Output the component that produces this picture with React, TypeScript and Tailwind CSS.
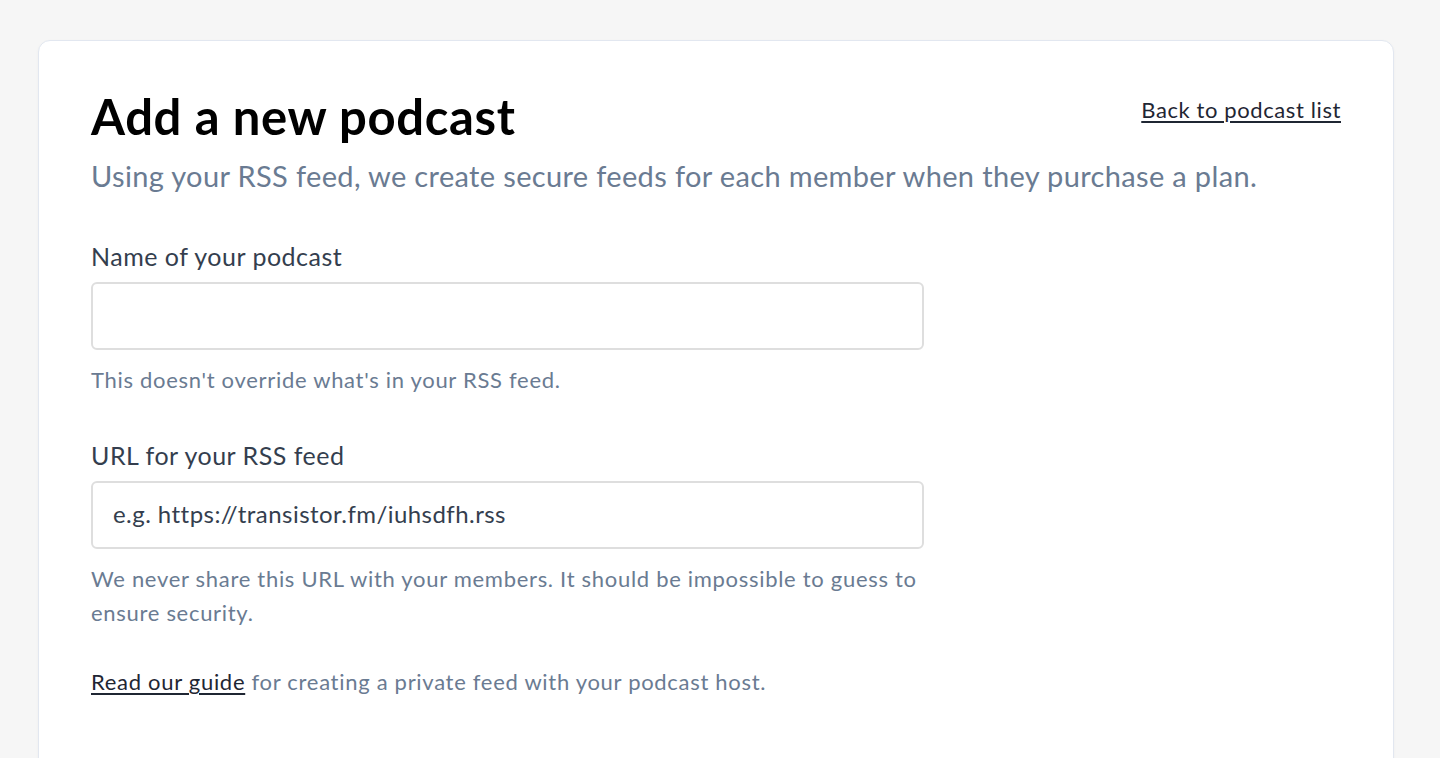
import React from "react";

export default function App() {
  return (
    <div
      className="min-h-[758px] bg-[#f6f6f6] pl-[38px] pr-[46px] pt-[40px] overflow-hidden"
      style={{ fontFamily: "Lato, 'Open Sans', sans-serif" }}
    >
      <div className="rounded-[12px] border border-[#e2e7f0] bg-white shadow-[0_1px_3px_rgba(0,0,0,0.04)] px-[52px] pt-[47px] pb-[120px]">
        <div className="flex items-start justify-between">
          <h1 className="text-[49px] leading-[56px] font-bold tracking-[0.65px] text-black">Add a new podcast</h1>
          <a href="#" className="mt-[8px] text-[22px] leading-[28px] tracking-[0.6px] text-[#1f2633] underline underline-offset-[3px]">
            Back to podcast list
          </a>
        </div>
        <p className="mt-[14px] text-[29px] leading-[36px] tracking-[0.35px] text-[#6a7b92]">
          Using your RSS feed, we create secure feeds for each member when they purchase a plan.
        </p>

        <div className="w-[833px]">
          <label className="mt-[46px] block text-[25px] leading-[32px] tracking-[0.5px] text-[#343e4e]">Name of your podcast</label>
          <input
            type="text"
            className="mt-[10px] block h-[68px] w-full rounded-[6px] border-2 border-[#dedede] bg-white px-[20px] text-[24px] tracking-[0.45px] text-[#343e4e] outline-none"
          />
          <p className="mt-[15px] text-[22px] leading-[30px] tracking-[0.7px] text-[#6a7b92]">
            This doesn't override what's in your RSS feed.
          </p>

          <label className="mt-[44px] block text-[25px] leading-[32px] tracking-[0.5px] text-[#343e4e]">URL for your RSS feed</label>
          <input
            type="text"
            placeholder="e.g. https://transistor.fm/iuhsdfh.rss"
            className="mt-[10px] block h-[68px] w-full rounded-[6px] border-2 border-[#dedede] bg-white px-[20px] pb-[4px] text-[24px] tracking-[0.45px] text-[#343e4e] placeholder:text-[#343e4e] outline-none"
          />
          <p className="mt-[13px] text-[22px] leading-[34px] tracking-[0.7px] text-[#6a7b92]">
            We never share this URL with your members. It should be impossible to guess to ensure security.
          </p>

          <p className="mt-[35px] text-[22px] leading-[34px] tracking-[0.7px] text-[#6a7b92]">
            <a href="#" className="text-[#1f2633] underline underline-offset-[3px]">Read our guide</a> for creating a
            private feed with your podcast host.
          </p>
        </div>
      </div>
    </div>
  );
}
